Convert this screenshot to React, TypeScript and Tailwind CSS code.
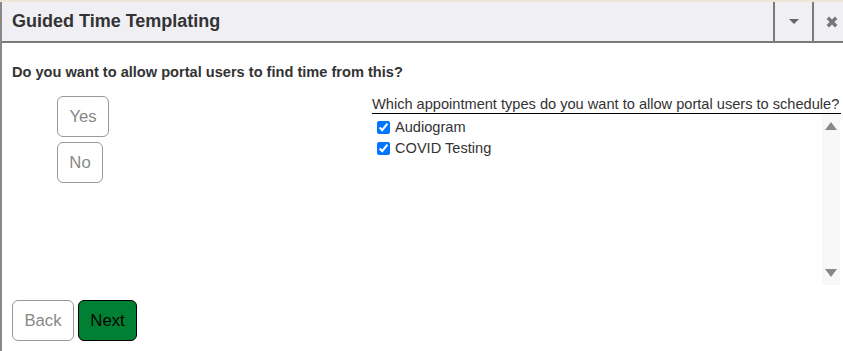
import React from "react";

export default function App() {
  return (
    <div className="w-[843px] h-[351px] overflow-hidden bg-white" style={{ fontFamily: '"Liberation Sans", Arial, sans-serif' }}>
      <div className="h-[2px] bg-[#ebe6d6]" />
      <div className="flex flex-col h-[349px] border-l-2 border-[#888]">
        <div className="flex h-[41px] bg-[#efeff4] border-b-2 border-[#7a7a7a]">
          <div className="flex-1 flex items-center pl-[10px] text-[18px] font-bold text-[#333]">Guided Time Templating</div>
          <div className="w-[39px] border-l-2 border-[#7a7a7a] flex items-center justify-center">
            <svg width="10" height="5" viewBox="0 0 10 5"><path d="M0 0h10L5 5z" fill="#666" /></svg>
          </div>
          <div className="w-[31px] border-l-2 border-[#7a7a7a] flex items-center pl-[12px]">
            <svg width="12" height="12" viewBox="0 0 12 12"><path d="M1.8 1.8l8.4 8.4M10.2 1.8l-8.4 8.4" stroke="#777" strokeWidth="3.4" /></svg>
          </div>
        </div>
        <div className="flex-1 flex flex-col pl-[10px] pt-[21px]">
          <div className="text-[14.6px] font-bold text-[#333] leading-[17px]">Do you want to allow portal users to find time from this?</div>
          <div className="flex mt-[6px]">
            <div className="w-[360px] flex flex-col items-start gap-[5px] pl-[45px] pt-[9px]">
              <button className="h-[41px] w-[52px] border border-[#999] rounded-[6px] text-[16.7px] text-[#888] bg-white">Yes</button>
              <button className="h-[41px] w-[46px] border border-[#999] rounded-[6px] text-[16.7px] text-[#888] bg-white">No</button>
            </div>
            <div className="flex-1 flex flex-col pt-[8px]">
              <div className="text-[14.6px] text-[#333] leading-[18px] border-b border-black self-start pr-[2px]">Which appointment types do you want to allow portal users to schedule?</div>
              <div className="flex h-[171px]">
                <div className="flex-1 flex flex-col pl-[5px] pt-[3px]">
                  <label className="flex items-center h-[21px] text-[14.6px] text-[#333]">
                    <input type="checkbox" defaultChecked className="w-[13px] h-[13px] m-0 mr-[5px] accent-[#0075ff]" />
                    Audiogram
                  </label>
                  <label className="flex items-center h-[21px] text-[14.6px] text-[#333]">
                    <input type="checkbox" defaultChecked className="w-[13px] h-[13px] m-0 mr-[5px] accent-[#0075ff]" />
                    COVID Testing
                  </label>
                </div>
                <div className="w-[18px] mr-[3px] bg-[#f8f8f8] flex flex-col items-center justify-between py-[8px]">
                  <svg width="12" height="8" viewBox="0 0 12 8"><path d="M6 0L12 8H0z" fill="#888" /></svg>
                  <svg width="12" height="8" viewBox="0 0 12 8"><path d="M0 0h12L6 8z" fill="#888" /></svg>
                </div>
              </div>
            </div>
          </div>
          <div className="flex gap-[4px] mt-[15px]">
            <button className="h-[41px] w-[62px] border border-[#999] rounded-[6px] text-[16.7px] text-[#888] bg-white">Back</button>
            <button className="h-[41px] w-[59px] border border-black rounded-[6px] text-[16.7px] text-black bg-[#008033]">Next</button>
          </div>
        </div>
      </div>
    </div>
  );
}
